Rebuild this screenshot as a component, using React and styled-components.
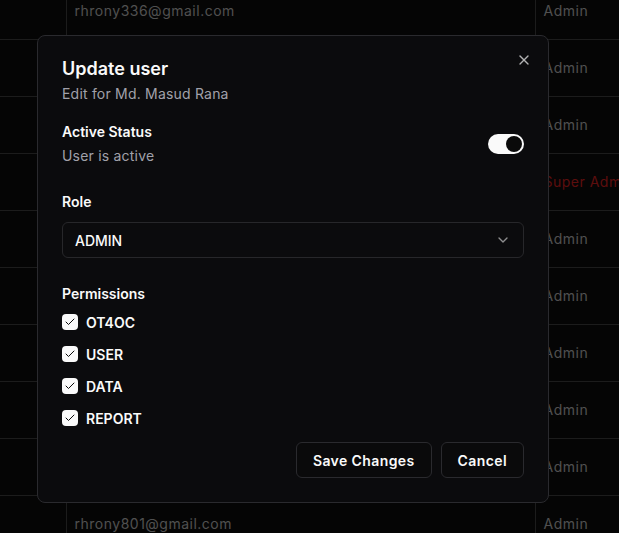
import React from "react";
import styled, { createGlobalStyle } from "styled-components";
import { Check, ChevronDown, X } from "lucide-react";

const Global = createGlobalStyle`
  html, body { margin: 0; padding: 0; background: #0a0a0a; overflow: hidden; }
  body { font-family: Inter, "Noto Sans", sans-serif; color: #fafafa; }
  * { box-sizing: border-box; }
`;

const Page = styled.div`
  width: 619px;
  height: 533px;
  overflow: hidden;
  background: #0a0a0a;
`;

const Table = styled.table`
  border-collapse: collapse;
  width: 100%;
  margin-top: -18px;
  table-layout: fixed;
`;

const Cell = styled.td`
  height: 57px;
  padding: 0 8px;
  border-bottom: 1px solid #383838;
  border-left: ${(p) => (p.$first ? "none" : "1px solid #383838")};
  font-size: 14px;
  letter-spacing: 0.5px;
  color: ${(p) => (p.$danger ? "#b91c1c" : "#a0a0a0")};
  white-space: nowrap;
  overflow: hidden;
  vertical-align: middle;
`;

const Overlay = styled.div`
  position: fixed;
  inset: 0;
  background: rgba(0, 0, 0, 0.5);
`;

const Dialog = styled.div`
  position: fixed;
  left: 37px;
  top: 35px;
  width: 512px;
  padding: 24px;
  background: #0b0b0d;
  border: 1px solid #2a2a2e;
  border-radius: 8px;
  display: flex;
  flex-direction: column;
`;

const CloseButton = styled.button`
  position: absolute;
  right: 16px;
  top: 16px;
  width: 16px;
  height: 16px;
  padding: 0;
  border: none;
  background: transparent;
  color: #fafafa;
  opacity: 0.7;
  display: flex;
  align-items: center;
  justify-content: center;
`;

const Title = styled.h2`
  margin: 0;
  font-size: 18px;
  line-height: 18px;
  font-weight: 600;
  color: #fafafa;
`;

const Muted = styled.p`
  margin: ${(p) => p.$mt || 0}px 0 0;
  font-size: 14px;
  line-height: 20px;
  letter-spacing: 0.2px;
  color: #a1a1aa;
`;

const Label = styled.div`
  margin-top: ${(p) => p.$mt || 0}px;
  font-size: 14px;
  line-height: 20px;
  font-weight: 600;
  color: #fafafa;
`;

const StatusRow = styled.div`
  margin-top: 18px;
  display: flex;
  align-items: center;
  justify-content: space-between;
`;

const Switch = styled.div`
  width: 36px;
  height: 20px;
  border-radius: 999px;
  background: #fafafa;
  padding: 2px;
  display: flex;
  justify-content: flex-end;
`;

const Thumb = styled.span`
  width: 16px;
  height: 16px;
  border-radius: 50%;
  background: #0a0a0a;
`;

const Select = styled.div`
  margin-top: 10px;
  height: 36px;
  border: 1px solid #27272a;
  border-radius: 6px;
  padding: 0 12px;
  display: flex;
  align-items: center;
  justify-content: space-between;
  font-size: 14px;
  font-weight: 500;
  color: #fafafa;
`;

const Chevron = styled(ChevronDown)`
  opacity: 0.55;
`;

const PermList = styled.div`
  margin-top: 8px;
  display: flex;
  flex-direction: column;
  gap: 12px;
`;

const PermRow = styled.label`
  display: flex;
  align-items: center;
  gap: 8px;
  height: 20px;
  font-size: 14px;
  font-weight: 600;
  color: #fafafa;
`;

const Box = styled.span`
  width: 16px;
  height: 16px;
  border-radius: 4px;
  background: #fafafa;
  color: #0a0a0a;
  display: flex;
  align-items: center;
  justify-content: center;
`;

const Footer = styled.div`
  margin-top: 14px;
  display: flex;
  justify-content: flex-end;
  gap: 9px;
`;

const Button = styled.button`
  height: 36px;
  padding: 0 16px;
  border: 1px solid #2a2a2e;
  border-radius: 6px;
  background: #0a0a0b;
  color: #fafafa;
  font-family: inherit;
  font-size: 14px;
  font-weight: 600;
  letter-spacing: 0.4px;
`;

const rows = [
  { email: "rhrony336@gmail.com", role: "Admin" },
  { email: "masud.rana@gmail.com", role: "Admin" },
  { email: "rhrony512@gmail.com", role: "Admin" },
  { email: "superadmin@gmail.com", role: "Super Admin", danger: true },
  { email: "rhrony217@gmail.com", role: "Admin" },
  { email: "rhrony455@gmail.com", role: "Admin" },
  { email: "rhrony690@gmail.com", role: "Admin" },
  { email: "rhrony742@gmail.com", role: "Admin" },
  { email: "rhrony788@gmail.com", role: "Admin" },
  { email: "rhrony801@gmail.com", role: "Admin" },
];

const permissions = ["OT4OC", "USER", "DATA", "REPORT"];

export default function App() {
  return (
    <Page>
      <Global />
      <Table>
        <colgroup>
          <col style={{ width: 66 }} />
          <col style={{ width: 469 }} />
          <col />
        </colgroup>
        <tbody>
          {rows.map((r, i) => (
            <tr key={i}>
              <Cell $first />
              <Cell>{r.email}</Cell>
              <Cell $danger={r.danger}>{r.role}</Cell>
            </tr>
          ))}
        </tbody>
      </Table>
      <Overlay />
      <Dialog role="dialog">
        <CloseButton aria-label="Close">
          <X size={16} strokeWidth={2} />
        </CloseButton>
        <Title>Update user</Title>
        <Muted $mt={6}>Edit for Md. Masud Rana</Muted>
        <StatusRow>
          <div>
            <Label>Active Status</Label>
            <Muted $mt={4}>User is active</Muted>
          </div>
          <Switch>
            <Thumb />
          </Switch>
        </StatusRow>
        <Label $mt={26}>Role</Label>
        <Select>
          <span>ADMIN</span>
          <Chevron size={16} />
        </Select>
        <Label $mt={26}>Permissions</Label>
        <PermList>
          {permissions.map((p) => (
            <PermRow key={p}>
              <Box>
                <Check size={12} strokeWidth={2} />
              </Box>
              {p}
            </PermRow>
          ))}
        </PermList>
        <Footer>
          <Button>Save Changes</Button>
          <Button>Cancel</Button>
        </Footer>
      </Dialog>
    </Page>
  );
}
